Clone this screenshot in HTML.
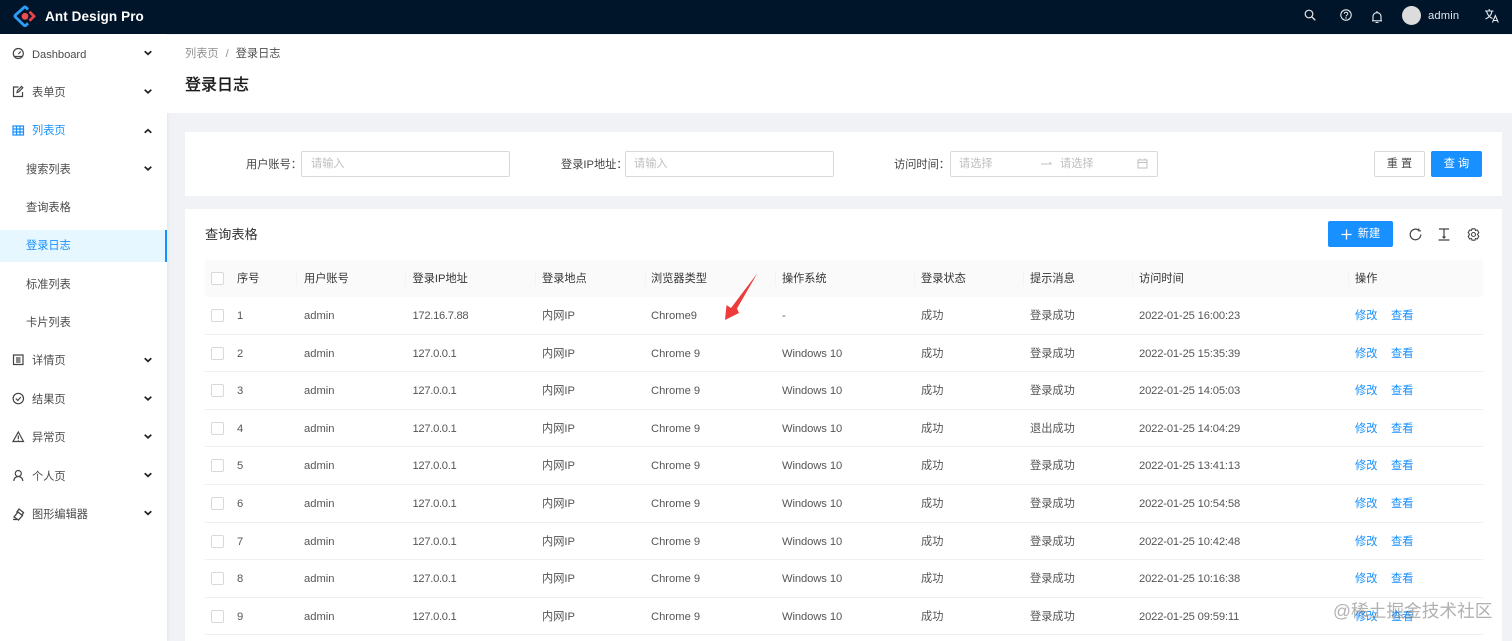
<!DOCTYPE html>
<html><head><meta charset="utf-8"><style>
*{box-sizing:border-box;margin:0;padding:0}
html,body{width:1512px;height:641px;overflow:hidden;background:#f0f2f5}
body{position:relative;font-family:"Liberation Sans","Noto Sans CJK SC",sans-serif;font-size:11.2px;color:rgba(0,0,0,.68)}
.m{position:absolute;left:32px;line-height:16px;white-space:nowrap;color:rgba(0,0,0,.72);margin-top:.6px}
.s{left:26px}
svg{position:absolute;overflow:visible}
.i{fill:none;stroke:#444;stroke-width:1.2}
.r{position:absolute;left:205px;width:1278px;height:37.6px;border-bottom:1px solid #f0f0f0}
.r>*{position:absolute;top:11px;line-height:16px;white-space:nowrap}
.r b{left:6px;top:12px;width:13px;height:13px;border:1px solid #d9d9d9;border-radius:2px;background:#fff}
.h{background:#fafafa;border:0;height:37px;top:260px;color:rgba(0,0,0,.8)}
.h i{top:11px;width:1px;height:15px;background:#f3f3f3}
.c1{left:32px}.c2{left:99px}.c3{left:207.500px;letter-spacing:-.3px}.c4{left:337px}.c5{left:446px}.c6{left:577px;letter-spacing:-.08px}.c7{left:716px}.c8{left:825px}.c9{left:934px;letter-spacing:-.15px}.c10{left:1150px;color:#1890ff}.c11{left:1186px;color:#1890ff}
.h .c3,.h .c9{letter-spacing:0}
.inp{position:absolute;top:151px;height:26px;background:#fff;border:1px solid #d9d9d9;border-radius:2px;color:#bfbfbf;line-height:25px;padding-left:9px}
.l{position:absolute;top:157px;line-height:16px;color:rgba(0,0,0,.75);white-space:nowrap}
.btn{position:absolute;height:26px;border-radius:2px;text-align:center;line-height:27px;white-space:nowrap}
</style></head><body>
<div style="position:absolute;left:0;top:0;width:1512px;height:34px;background:#00152a"></div>
<svg style="left:12.500px;top:3.500px" width="24" height="24" viewBox="0 0 24 24"><path d="M15 5.500 12.800 3.300a1.200 1.200 0 0 0-1.700 0L2.300 11.200a1.200 1.200 0 0 0 0 1.700l8.800 8.500a1.200 1.200 0 0 0 1.700 0L15 19.300" fill="none" stroke="#2f9cf5" stroke-width="2.800"/><path d="M16.500 7.800 21 12.300l-4.500 4.500" fill="none" stroke="#e8434a" stroke-width="2.800"/><circle cx="12" cy="12.300" r="3.400" fill="#ee4d50"/></svg>
<div style="position:absolute;left:45px;top:8px;font-size:13.500px;line-height:18px;font-weight:700;color:#fff;letter-spacing:.1px;white-space:nowrap">Ant Design Pro</div>
<svg style="left:1304px;top:9px" width="12" height="12" viewBox="0 0 12 12"><circle cx="5" cy="5" r="3.800" fill="none" stroke="#e4e8ec" stroke-width="1.200"/><path d="M8 8l3.300 3.300" stroke="#e4e8ec" stroke-width="1.300"/></svg>
<svg style="left:1340px;top:9px" width="12" height="12" viewBox="0 0 12 12"><circle cx="6" cy="6" r="5.200" fill="none" stroke="#e4e8ec" stroke-width="1.100"/><path d="M4.300 4.800C4.300 2.700 7.800 2.700 7.800 4.800 7.800 6 6 6 6 7.500" fill="none" stroke="#e4e8ec" stroke-width="1"/><circle cx="6" cy="9" r=".7" fill="#e4e8ec"/></svg>
<svg style="left:1372px;top:11px" width="10" height="13" viewBox="0 0 10 13"><path d="M1 9.500V5.500C1 3.200 2.800 1.700 5 1.700S9 3.200 9 5.500V9.500M0 9.800H10M3.500 11.500H6.500M5 0V1.500" fill="none" stroke="#e4e8ec" stroke-width="1.100"/></svg>
<div style="position:absolute;left:1402px;top:6px;width:19px;height:19px;border-radius:50%;background:#dcdcdc"></div>
<div style="position:absolute;left:1428px;top:8px;line-height:16px;color:#e3e6ea;font-size:11.200px;letter-spacing:.15px">admin</div>
<svg style="left:1485px;top:9px" width="14" height="14" viewBox="0 0 14 14"><path d="M0 2H8.500M4.200 0V2M1.500 2C2.500 6 5 8.500 7.500 9.500M7 2C6.500 5.500 4 8.500.5 10M7.500 13.500 10.300 6.500 13.300 13.500M8.500 11.500H12.300" fill="none" stroke="#e4e8ec" stroke-width="1.100"/></svg>

<div style="position:absolute;left:0;top:34px;width:167px;height:607px;background:#fff;box-shadow:1px 0 3px rgba(0,0,0,.05)"></div>
<div style="position:absolute;left:0;top:230px;width:167px;height:32px;background:#e6f7ff;border-right:2.500px solid #1890ff"></div>

<div class="m" style="top:46px;letter-spacing:-.05px">Dashboard</div>
<div class="m" style="top:84px">表单页</div>
<div class="m" style="top:122px;color:#1890ff">列表页</div>
<div class="m s" style="top:161px">搜索列表</div>
<div class="m s" style="top:199px">查询表格</div>
<div class="m s" style="top:237px;color:#1890ff">登录日志</div>
<div class="m s" style="top:276px">标准列表</div>
<div class="m s" style="top:314px">卡片列表</div>
<div class="m" style="top:352px">详情页</div>
<div class="m" style="top:391px">结果页</div>
<div class="m" style="top:429px">异常页</div>
<div class="m" style="top:468px">个人页</div>
<div class="m" style="top:506px">图形编辑器</div>

<svg style="left:0;top:0" width="167" height="641" viewBox="0 0 167 641">
<g fill="none" stroke="#222" stroke-width="1.700">
<path d="M144.700 51.300l3.300 3 3.300-3M144.700 89.800l3.300 3 3.300-3M144.700 132.800l3.300-3 3.300 3M144.700 166.800l3.300 3 3.300-3M144.700 358.300l3.300 3 3.300-3M144.700 396.800l3.300 3 3.300-3M144.700 434.800l3.300 3 3.300-3M144.700 473.300l3.300 3 3.300-3M144.700 511.300l3.300 3 3.300-3"/>
</g>
<g class="i">
<circle cx="18.300" cy="53.500" r="5"/><path d="M18.300 54l2.500-2.500M14.500 56.500H22"/>
<path d="M22.500 92V96.500H13.500V87H18.500M17 92.500l.5-2 4-4 1.300 1.300-4 4z"/>
<path d="M13 126H23.500V135H13zM13 129H23.500M13 132H23.500M16.500 126V135M20 126V135" stroke="#1890ff"/>
<path d="M13.500 355H23V364.500H13.500zM16 358H20.500M16 360H20.500M16 362H20.500"/>
<circle cx="18.300" cy="398.500" r="5.200"/><path d="M15.800 398.500l2 2 3-3.500"/>
<path d="M18.300 432 23.500 441.500H13zM18.300 435.500V439M18.300 439.800V440.500"/>
<circle cx="18.300" cy="473.500" r="3"/><path d="M13.800 481C14 475 22.500 475 22.800 481"/>
<path d="M14 517l4-5 4.500 3.500-4 4.500zM16.500 512.500 19 509l4.500 3.500-1.500 2.500M13 519.500h4" stroke-width="1.300"/>
</g></svg>

<div style="position:absolute;left:167px;top:35px;width:1345px;height:78px;background:#fff"></div>
<div style="position:absolute;left:185px;top:45px;line-height:16px;color:rgba(0,0,0,.45);white-space:nowrap;margin-top:.6px">列表页<span style="margin:0 7px">/</span><span style="color:rgba(0,0,0,.7)">登录日志</span></div>
<div style="position:absolute;left:185px;top:75.500px;font-size:16px;line-height:20px;font-weight:500;color:rgba(0,0,0,.88);white-space:nowrap;-webkit-text-stroke:.25px rgba(0,0,0,.6)">登录日志</div>

<div style="position:absolute;left:185px;top:132px;width:1317px;height:64px;background:#fff"></div>
<div class="l" style="left:246px">用户账号：</div><div class="inp" style="left:301px;width:209px">请输入</div>
<div class="l" style="left:561px">登录IP地址：</div><div class="inp" style="left:625px;width:209px;padding-left:8px">请输入</div>
<div class="l" style="left:894px">访问时间：</div><div class="inp" style="left:950px;width:208px;padding-left:8px">请选择<span style="position:absolute;left:109px;top:0">请选择</span></div>
<svg style="left:1040px;top:160px" width="14" height="8" viewBox="0 0 14 8"><path d="M1 4H11.500M9.500 2.300 11.500 4" fill="none" stroke="#bfbfbf" stroke-width="1"/></svg>
<svg style="left:1137px;top:158px" width="11" height="11" viewBox="0 0 11 11"><path d="M1 2H10V10H1zM1 4.500H10M3 .5V2M8 .5V2" fill="none" stroke="#bfbfbf" stroke-width="1"/></svg>
<div class="btn" style="left:1374px;top:151px;width:51px;background:#fff;border:1px solid #d9d9d9;letter-spacing:3px;padding-left:3px;line-height:25px;color:rgba(0,0,0,.72)">重置</div>
<div class="btn" style="left:1431px;top:151px;width:51px;background:#1890ff;color:#fff;letter-spacing:3px;padding-left:3px">查询</div>

<div style="position:absolute;left:185px;top:209px;width:1317px;height:432px;background:#fff"></div>
<div style="position:absolute;left:205px;top:226px;font-size:13.200px;line-height:18px;color:rgba(0,0,0,.8);white-space:nowrap">查询表格</div>
<div class="btn" style="left:1328px;top:221px;width:65px;background:#1890ff;color:#fff;padding-left:17px">新建</div>
<svg style="left:1341px;top:228.500px" width="11" height="11" viewBox="0 0 11 11"><path d="M5.500.5V10.500M.5 5.500H10.500" stroke="#fff" stroke-width="1.300"/></svg>
<svg style="left:1409px;top:228px" width="13" height="13" viewBox="0 0 13 13"><path d="M11.800 6.500A5.300 5.300 0 1 1 9.500 2.100M9.800 .5V2.800H12" fill="none" stroke="#444" stroke-width="1.200"/></svg>
<svg style="left:1438px;top:228px" width="12" height="13" viewBox="0 0 12 13"><path d="M1 1H11M0.500 12H11.500M6 1V10M4.500 8.500 6 10 7.500 8.500" fill="none" stroke="#444" stroke-width="1.200"/></svg>
<svg style="left:1467px;top:228px" width="13" height="13" viewBox="0 0 13 13"><path d="M5 .8H8L8.500 2.500 10.300 2 11.800 4.600 10.500 6.500 11.800 8.400 10.300 11 8.500 10.500 8 12.200H5L4.500 10.500 2.700 11 1.200 8.400 2.500 6.500 1.200 4.600 2.700 2 4.500 2.500z" fill="none" stroke="#444" stroke-width="1.100"/><circle cx="6.500" cy="6.500" r="2" fill="none" stroke="#444" stroke-width="1.100"/></svg>

<div class="r h"><b style="top:12px"></b><span class="c1">序号</span><i style="left:91px"></i><span class="c2">用户账号</span><i style="left:200px"></i><span class="c3">登录IP地址</span><i style="left:330px"></i><span class="c4">登录地点</span><i style="left:440px"></i><span class="c5">浏览器类型</span><i style="left:570px"></i><span class="c6">操作系统</span><i style="left:709px"></i><span class="c7">登录状态</span><i style="left:818px"></i><span class="c8">提示消息</span><i style="left:927px"></i><span class="c9">访问时间</span><i style="left:1143px"></i><span class="c10" style="color:rgba(0,0,0,.8)">操作</span></div>

<div class="r" style="top:297px"><b></b><span class="c1">1</span><span class="c2">admin</span><span class="c3">172.16.7.88</span><span class="c4">内网IP</span><span class="c5">Chrome9</span><span class="c6">-</span><span class="c7">成功</span><span class="c8">登录成功</span><span class="c9">2022-01-25 16:00:23</span><span class="c10">修改</span><span class="c11">查看</span></div>
<div class="r" style="top:334.600px"><b></b><span class="c1">2</span><span class="c2">admin</span><span class="c3">127.0.0.1</span><span class="c4">内网IP</span><span class="c5">Chrome 9</span><span class="c6">Windows 10</span><span class="c7">成功</span><span class="c8">登录成功</span><span class="c9">2022-01-25 15:35:39</span><span class="c10">修改</span><span class="c11">查看</span></div>
<div class="r" style="top:372.200px"><b></b><span class="c1">3</span><span class="c2">admin</span><span class="c3">127.0.0.1</span><span class="c4">内网IP</span><span class="c5">Chrome 9</span><span class="c6">Windows 10</span><span class="c7">成功</span><span class="c8">登录成功</span><span class="c9">2022-01-25 14:05:03</span><span class="c10">修改</span><span class="c11">查看</span></div>
<div class="r" style="top:409.800px"><b></b><span class="c1">4</span><span class="c2">admin</span><span class="c3">127.0.0.1</span><span class="c4">内网IP</span><span class="c5">Chrome 9</span><span class="c6">Windows 10</span><span class="c7">成功</span><span class="c8">退出成功</span><span class="c9">2022-01-25 14:04:29</span><span class="c10">修改</span><span class="c11">查看</span></div>
<div class="r" style="top:447.400px"><b></b><span class="c1">5</span><span class="c2">admin</span><span class="c3">127.0.0.1</span><span class="c4">内网IP</span><span class="c5">Chrome 9</span><span class="c6">Windows 10</span><span class="c7">成功</span><span class="c8">登录成功</span><span class="c9">2022-01-25 13:41:13</span><span class="c10">修改</span><span class="c11">查看</span></div>
<div class="r" style="top:485px"><b></b><span class="c1">6</span><span class="c2">admin</span><span class="c3">127.0.0.1</span><span class="c4">内网IP</span><span class="c5">Chrome 9</span><span class="c6">Windows 10</span><span class="c7">成功</span><span class="c8">登录成功</span><span class="c9">2022-01-25 10:54:58</span><span class="c10">修改</span><span class="c11">查看</span></div>
<div class="r" style="top:522.600px"><b></b><span class="c1">7</span><span class="c2">admin</span><span class="c3">127.0.0.1</span><span class="c4">内网IP</span><span class="c5">Chrome 9</span><span class="c6">Windows 10</span><span class="c7">成功</span><span class="c8">登录成功</span><span class="c9">2022-01-25 10:42:48</span><span class="c10">修改</span><span class="c11">查看</span></div>
<div class="r" style="top:560.200px"><b></b><span class="c1">8</span><span class="c2">admin</span><span class="c3">127.0.0.1</span><span class="c4">内网IP</span><span class="c5">Chrome 9</span><span class="c6">Windows 10</span><span class="c7">成功</span><span class="c8">登录成功</span><span class="c9">2022-01-25 10:16:38</span><span class="c10">修改</span><span class="c11">查看</span></div>
<div class="r" style="top:597.800px"><b></b><span class="c1">9</span><span class="c2">admin</span><span class="c3">127.0.0.1</span><span class="c4">内网IP</span><span class="c5">Chrome 9</span><span class="c6">Windows 10</span><span class="c7">成功</span><span class="c8">登录成功</span><span class="c9">2022-01-25 09:59:11</span><span class="c10">修改</span><span class="c11">查看</span></div>

<svg style="left:0;top:0" width="1512" height="641" viewBox="0 0 1512 641"><path d="M757.500 273 737 308.500 739 313 725 320 726.500 305 731 308z" fill="#ee3b3b"/></svg>
<div style="position:absolute;left:1333px;top:599px;font-size:17.700px;line-height:24px;color:rgba(100,100,100,.5);white-space:nowrap">@稀土掘金技术社区</div>
</body></html>
